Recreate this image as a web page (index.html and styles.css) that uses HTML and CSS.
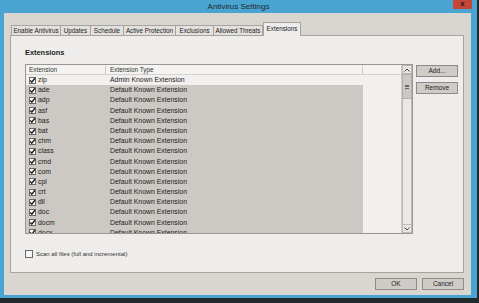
FILE: index.html
```html
<!DOCTYPE html>
<html lang="en">
<head>
    <meta charset="UTF-8">
    <title>Antivirus Settings</title>
    <link rel="stylesheet" href="styles.css">
</head>
<body>
    <div class="window">
        <div class="titlebar">
            <span></span>
            <span class="title">Antivirus Settings</span>
            <span class="close">x</span>
        </div>

        <div class="client">
            <div class="tabs">
                <div class="tab w-enable">Enable Antivirus</div>
                <div class="tab w-updates">Updates</div>
                <div class="tab w-schedule">Schedule</div>
                <div class="tab w-active">Active Protection</div>
                <div class="tab w-excl">Exclusions</div>
                <div class="tab w-allowed">Allowed Threats</div>
                <div class="tab active w-ext">Extensions</div>
            </div>

            <div class="panel">
                <div class="heading">Extensions</div>

                <div class="list-area">
                    <div class="list">
                        <div class="grid">
                            <div class="header">
                                <div class="hcell c1">Extension</div>
                                <div class="hcell c2">Extension Type</div>
                                <div class="hcell c3"></div>
                            </div>
                            <div id="rows"></div>
                        </div>
                        <div class="scrollbar">
                            <div class="sb-btn">
                                <svg width="6" height="4" viewBox="0 0 6 4"><path d="M0.5 3.5 L3 1 L5.5 3.5" fill="none" stroke="#444" stroke-width="1"/></svg>
                            </div>
                            <div class="sb-thumb"><span class="grip"></span></div>
                            <div class="sb-track"></div>
                            <div class="sb-btn">
                                <svg width="6" height="4" viewBox="0 0 6 4"><path d="M0.5 0.5 L3 3 L5.5 0.5" fill="none" stroke="#444" stroke-width="1"/></svg>
                            </div>
                        </div>
                    </div>

                    <div class="side-buttons">
                        <button class="btn">Add...</button>
                        <button class="btn">Remove</button>
                    </div>
                </div>

                <div class="scan">
                    <span class="box"></span>
                    <span>Scan all files (full and incremental)</span>
                </div>
            </div>

            <div class="footer">
                <button class="btn wide">OK</button>
                <button class="btn wide">Cancel</button>
            </div>
        </div>
    </div>

    <script>
        var exts = ["zip", "ade", "adp", "asf", "bas", "bat", "chm", "class", "cmd",
                    "com", "cpl", "crt", "dll", "doc", "docm", "docx"];
        var check = '<svg width="7" height="7" viewBox="0 0 7 7"><path d="M1.2 3.4 L2.8 5.2 L5.9 1.2" fill="none" stroke="#1c1c1c" stroke-width="1.4"/></svg>';
        var html = "";
        exts.forEach(function (e, i) {
            var type = i === 0 ? "Admin Known Extension" : "Default Known Extension";
            html += '<div class="row' + (i > 0 ? ' sel' : '') + '">' +
                '<div class="cell c1"><span class="cb">' + check + '</span>' + e + '</div>' +
                '<div class="cell c2">' + type + '</div></div>';
        });
        document.getElementById("rows").innerHTML = html;
    </script>
</body>
</html>
```

FILE: styles.css
```css
body {
    margin: 0;
    background: #23282b;
    font-family: "Liberation Sans", Arial, sans-serif;
    color: #222;
}
.window {
    width: 477px;
    height: 298px;
    background: #4aa4d1;
    display: flex;
    flex-direction: column;
}
.titlebar {
    height: 13px;
    display: grid;
    grid-template-columns: 1fr auto 1fr;
    align-items: start;
}
.title {
    font-size: 8px;
    line-height: 13px;
    color: #1d2a33;
}
.close {
    justify-self: end;
    width: 19px;
    height: 9px;
    margin-right: 5px;
    background: #c4473a;
    color: #2a1512;
    font-size: 8px;
    font-weight: bold;
    line-height: 8px;
    text-align: center;
}
.client {
    flex: 1;
    margin: 0 6px 3px 4px;
    background: #d9d6d2;
    display: flex;
    flex-direction: column;
}
.tabs {
    display: flex;
    align-items: flex-end;
    padding: 9px 0 0 7px;
    height: 13px;
    box-sizing: content-box;
    position: relative;
    z-index: 1;
}
.tab {
    height: 10px;
    box-sizing: border-box;
    border: 1px solid #a7a4a0;
    border-bottom: none;
    border-left: none;
    background: #e3e1de;
    font-size: 6.3px;
    line-height: 9px;
    text-align: center;
    white-space: nowrap;
    margin-bottom: 0;
}
.tab:first-child {
    border-left: 1px solid #a7a4a0;
}
.tab.active {
    height: 14px;
    margin-bottom: -1px;
    border-left: 1px solid #a7a4a0;
    background: #eeedeb;
    line-height: 11px;
}
.w-enable { width: 50px; }
.w-updates { width: 30px; }
.w-schedule { width: 33px; }
.w-active { width: 52px; }
.w-excl { width: 38px; }
.w-allowed { width: 49px; }
.w-ext { width: 38px; }

.panel {
    margin-left: 6px;
    width: 454px;
    height: 238px;
    box-sizing: border-box;
    border: 1px solid #a7a4a0;
    background: #eeedeb;
    padding: 12px 0 0 14px;
}
.heading {
    font-size: 7.4px;
    font-weight: bold;
    line-height: 9px;
    color: #1e1e1e;
}
.list-area {
    display: flex;
    align-items: flex-start;
    margin-top: 7px;
}
.list {
    width: 388px;
    height: 170px;
    box-sizing: border-box;
    border: 1px solid #9a9793;
    background: #f1f0ee;
    display: flex;
    overflow: hidden;
}
.grid {
    width: 376px;
    overflow: hidden;
}
.header {
    display: flex;
    height: 10px;
    background: #f4f3f1;
    border-bottom: 1px solid #d6d3cf;
    box-sizing: border-box;
}
.hcell {
    font-size: 6.4px;
    line-height: 10px;
    padding-left: 3px;
    border-right: 1px solid #d0cdc9;
    box-sizing: border-box;
    color: #333;
}
.c1 { width: 80px; }
.c2 { width: 257px; }
.c3 { flex: 1; border-right: none; }
.header .c2 { padding-left: 4px; }

.row {
    display: flex;
    width: 337px;
    height: 10.2px;
}
.row.sel {
    background: #ccc8c3;
}
.cell {
    display: flex;
    align-items: center;
    font-size: 6.9px;
    line-height: 10.2px;
    white-space: nowrap;
    color: #222;
}
.cell.c1 {
    padding-left: 3px;
    box-sizing: border-box;
}
.cell.c2 {
    padding-left: 4px;
    box-sizing: border-box;
}
.cb {
    width: 7px;
    height: 7px;
    box-sizing: border-box;
    border: 1px solid #6b6966;
    background: #fff;
    margin-right: 2px;
    display: flex;
    align-items: center;
    justify-content: center;
}
.cb svg {
    flex: none;
}

.scrollbar {
    width: 10px;
    display: flex;
    flex-direction: column;
    background: #ebe9e7;
    border-left: 1px solid #cfccc8;
}
.sb-btn {
    height: 9px;
    display: flex;
    align-items: center;
    justify-content: center;
    background: #e9e7e4;
    border: 1px solid #bdbab6;
    box-sizing: border-box;
}
.sb-thumb {
    height: 25px;
    background: #ccc9c5;
    border: 1px solid #b2afab;
    box-sizing: border-box;
    display: flex;
    align-items: center;
    justify-content: center;
}
.grip {
    width: 4px;
    height: 4px;
    border-top: 1px solid #666;
    border-bottom: 1px solid #666;
    box-sizing: border-box;
    background: linear-gradient(#666, #666) center / 4px 1px no-repeat;
}
.sb-track {
    flex: 1;
    border-left: 1px solid #bdbab6;
    border-right: 1px solid #bdbab6;
}

.side-buttons {
    display: flex;
    flex-direction: column;
    gap: 5px;
    margin-left: 3px;
    padding-top: 1px;
}
.btn {
    width: 42px;
    height: 12px;
    padding: 0;
    border: 1px solid #8d8a87;
    background: #cfccc8;
    font-family: "Liberation Sans", Arial, sans-serif;
    font-size: 6.5px;
    line-height: 10px;
    color: #222;
}
.scan {
    display: flex;
    align-items: center;
    gap: 3px;
    margin-top: 16px;
    font-size: 6px;
    color: #333;
}
.box {
    width: 8px;
    height: 8px;
    box-sizing: border-box;
    border: 1px solid #6d6b68;
    background: #f7f7f7;
}
.footer {
    display: flex;
    justify-content: flex-end;
    gap: 5px;
    margin-top: 5px;
    padding-right: 7px;
}
.btn.wide {
    width: 42px;
    height: 12px;
}
```
